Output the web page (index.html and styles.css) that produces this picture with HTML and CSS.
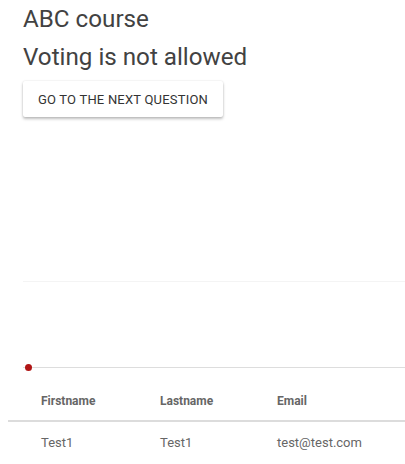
FILE: index.html
```html
<!DOCTYPE html>
<html>
<head>
<meta charset="utf-8">
<link rel="stylesheet" href="styles.css">
</head>
<body>
<div class="page">
  <div class="content">
    <h1 class="title">ABC course</h1>
    <h2 class="status">Voting is not allowed</h2>
    <button class="btn">GO TO THE NEXT QUESTION</button>
    <div class="chart">
      <div class="grid-line"></div>
      <div class="axis">
        <span class="dot"></span>
      </div>
    </div>
  </div>
  <div class="table">
    <div class="row head">
      <div class="cell">Firstname</div>
      <div class="cell">Lastname</div>
      <div class="cell">Email</div>
    </div>
    <div class="row body-row">
      <div class="cell">Test1</div>
      <div class="cell">Test1</div>
      <div class="cell">test@test.com</div>
    </div>
  </div>
</div>
</body>
</html>
```
FILE: styles.css
```css
html, body {
  margin: 0;
  padding: 0;
  background: #fff;
}
body {
  font-family: Roboto, "Liberation Sans", sans-serif;
  color: #424242;
  overflow: hidden;
}
.page {
  padding-left: 8px;
}
.content {
  padding-left: 15px;
}
.title {
  margin: 0;
  padding-top: 5px;
  font-size: 24.2px;
  font-weight: 400;
  line-height: 28px;
  color: #424242;
}
.status {
  margin: 0;
  padding-top: 10px;
  font-size: 24.2px;
  font-weight: 400;
  line-height: 28px;
  color: #424242;
}
.btn {
  display: block;
  margin-top: 10px;
  width: 200px;
  height: 36px;
  border: none;
  border-radius: 2px;
  background: #fff;
  box-shadow: 0 2px 3px rgba(0,0,0,0.25), 0 0 2px rgba(0,0,0,0.12);
  font-family: Roboto, "Liberation Sans", sans-serif;
  font-size: 13px;
  letter-spacing: 0.2px;
  color: #333;
  padding: 0;
}
.chart {
  height: 251px;
  display: flex;
  flex-direction: column;
}
.grid-line {
  margin-top: 164px;
  height: 1px;
  background: #f4f4f4;
}
.axis {
  margin-top: 85px;
  height: 1px;
  background: #ddd;
  position: relative;
}
.dot {
  position: absolute;
  left: 2px;
  top: -3px;
  width: 7px;
  height: 7px;
  border-radius: 50%;
  background: #b01515;
}
.table {
  margin-top: 19px;
}
.row {
  display: grid;
  grid-template-columns: 119px 117px 1fr;
  padding-left: 33px;
}
.head {
  height: 27px;
  padding-bottom: 6px;
  border-bottom: 2px solid #dcdcdc;
  align-items: center;
}
.head .cell {
  font-size: 12px;
  font-weight: 700;
  color: #666;
}
.body-row {
  height: 40px;
  align-items: center;
}
.body-row .cell {
  font-size: 13px;
  color: #666;
}
```
